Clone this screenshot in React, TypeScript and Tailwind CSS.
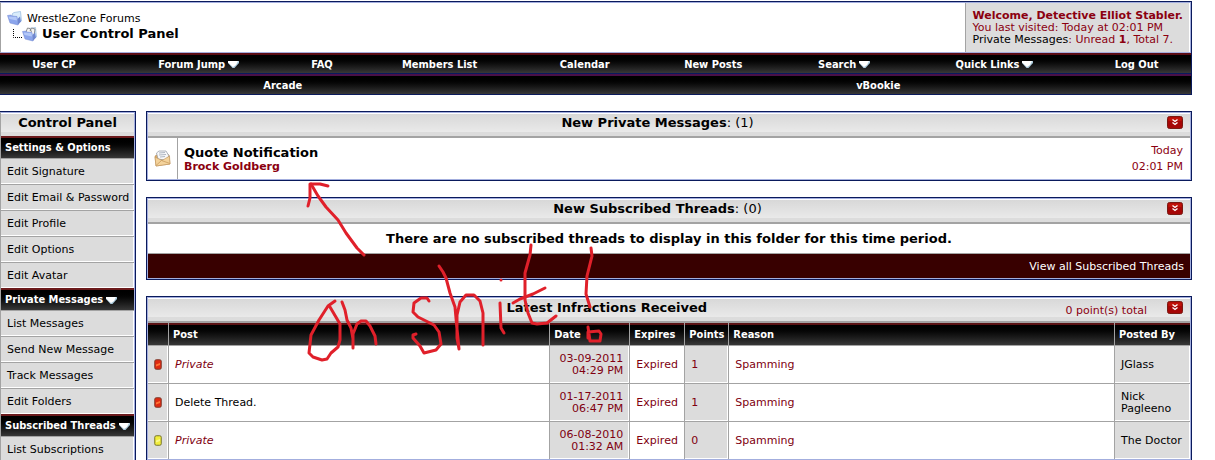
import type { ReactNode } from 'react';

const navLinks = [
  { label: 'User CP' },
  { label: 'Forum Jump', menu: true },
  { label: 'FAQ' },
  { label: 'Members List' },
  { label: 'Calendar' },
  { label: 'New Posts' },
  { label: 'Search', menu: true },
  { label: 'Quick Links', menu: true },
  { label: 'Log Out' },
];

const subLinks = [{ label: 'Arcade' }, { label: 'vBookie' }];

const sections = [
  {
    title: 'Settings & Options',
    menu: false,
    items: ['Edit Signature', 'Edit Email & Password', 'Edit Profile', 'Edit Options', 'Edit Avatar'],
  },
  {
    title: 'Private Messages',
    menu: true,
    items: ['List Messages', 'Send New Message', 'Track Messages', 'Edit Folders'],
  },
  { title: 'Subscribed Threads', menu: true, items: ['List Subscriptions'] },
];

const infractions = [
  { card: 'red', post: 'Private', hidden: true, date: '03-09-2011', time: '04:29 PM', points: 1, by: 'JGlass' },
  { card: 'red', post: 'Delete Thread.', hidden: false, date: '01-17-2011', time: '06:47 PM', points: 1, by: 'Nick Pagleeno' },
  { card: 'yellow', post: 'Private', hidden: true, date: '06-08-2010', time: '01:32 AM', points: 0, by: 'The Doctor' },
];

const condensed = "[font-family:'DejaVu_Sans_Condensed','DejaVu_Sans',sans-serif] [font-stretch:condensed]";
const blackBar = 'bg-linear-to-b from-black to-[#383838] text-white font-bold';
const titleBar = 'border-t border-white bg-linear-to-b from-[#d8d8d8] from-0% via-[#e9e9e9] via-80% to-[#dcdcdc] to-80%';

function MenuArrow() {
  return (
    <svg className="ml-[3px] inline-block" width="11" height="7" viewBox="0 0 11 7" aria-hidden="true">
      <path d="M0 0H11V2L6.500 7H4.500L0 2Z" fill="#a9c9da" />
      <path d="M0 0H10L8 4L5 6L0 1.500Z" fill="#fff" />
    </svg>
  );
}

function FolderIcon({ filled = false }: { filled?: boolean }) {
  return (
    <svg width="15" height="15" viewBox="0 0 15 15" aria-hidden="true">
      <path d="M5 3L7 1.500L13.500 0.500L14.500 10L9 13Z" fill="#d9ecfb" stroke="#94b8de" strokeWidth="0.7" />
      {filled && <path d="M4 5L5.500 1L8 1.500L9.500 5M8 4L9.500 1L13 2L12 9" fill="#f4f4f4" stroke="#777" strokeWidth="0.8" />}
      <path d="M0.500 4.500L4 4L5 5L10 5.500L11 14L3 12Z" fill="#8ba5ec" stroke="#7289d2" strokeWidth="0.5" />
      <path d="M1.500 5.500L9.500 6L10 9.500L2.500 8Z" fill="#b3c8f8" />
      <path d="M11 14L14 10.500L13 5.500L10.500 8Z" fill="#6f87d0" />
    </svg>
  );
}

function MessageIcon() {
  return (
    <svg width="17" height="17" viewBox="0 0 17 17" aria-hidden="true">
      <path d="M1 6L8 2L15 5L16 14L2 16Z" fill="#dcae6c" stroke="#b88a4c" strokeWidth="0.6" />
      <path d="M2.500 3L5 1H12L15 6L11 10L4 9Z" fill="#f7f8fa" stroke="#8d95a2" strokeWidth="0.7" />
      <path d="M5 3L11 2.500M5 5L12 4.500M6 7L11 6.500" stroke="#9da6b4" strokeWidth="0.8" />
      <path d="M1 7L8 10.500L15.500 6L16 14L2 16Z" fill="#f4d39c" stroke="#bd925a" strokeWidth="0.6" />
      <path d="M2 15.500L7.500 10.500L16 13.500" fill="none" stroke="#c99c5d" strokeWidth="0.8" />
    </svg>
  );
}

function Card({ color }: { color: string }) {
  const red = color === 'red';
  return (
    <svg className="mx-auto block" width="8" height="11" viewBox="0 0 8 11" role="img" aria-label={`${color} card`}>
      <rect x="0.75" y="0.75" width="6.5" height="9.5" rx="1.5" fill={red ? '#e02a10' : '#f2ee3c'} stroke={red ? '#7d3a2c' : '#77752c'} />
      <path d="M2 5.500L6 4V6L2 7.500Z" fill={red ? '#ff7434' : '#fbf98c'} />
    </svg>
  );
}

function CollapseButton() {
  return (
    <button type="button" aria-label="Collapse" className="block h-[13px] w-4 shrink-0">
      <svg width="16" height="13" viewBox="0 0 16 13" aria-hidden="true">
        <rect x="0.5" y="0.5" width="15" height="12" rx="2" fill="#a60606" stroke="#7a1a12" />
        <path d="M1.500 1.500H14.500V5H1.500Z" fill="#c01208" />
        <path d="M5.500 3.500L8 5.500L10.500 3.500M5.500 6.500L8 8.500L10.500 6.500" fill="none" stroke="#fff" strokeWidth="1.300" />
      </svg>
    </button>
  );
}

function NavRow({ links, edge }: { links: { label: string; menu?: boolean }[]; edge: string }) {
  return (
    <ul className={`table w-full border-t-2 border-b border-b-[#0a1a5c] ${edge} ${blackBar} ${condensed}`}>
      {links.map((link) => (
        <li key={link.label} className="table-cell h-[18px] px-1.5 text-center align-middle whitespace-nowrap">
          <a href="#">
            {link.label}
            {link.menu && <MenuArrow />}
          </a>
        </li>
      ))}
    </ul>
  );
}

function Panel({ title, count, extra, children }: { title: string; count?: number; extra?: ReactNode; children: ReactNode }) {
  return (
    <section className="border border-[#0a1a5c]">
      <div className="border border-[#a3aede]">
        <header className={`flex h-[25px] items-start border-b-2 border-b-[#a3a3a3] pr-[7px] ${titleBar}`}>
          <h2 className="flex-1 text-center text-[13px] leading-[18px] font-bold">
            {title}
            {count !== undefined && <span className="font-normal">: ({count})</span>}
          </h2>
          {extra}
          <div className="pt-0.5">
            <CollapseButton />
          </div>
        </header>
        {children}
      </div>
    </section>
  );
}

function Sidebar() {
  return (
    <aside className="w-[136px] shrink-0 border border-l-0 border-[#0a1a5c]">
      <div className="border border-[#a3aede] border-l-[#a3a3a3]">
        <h2 className={`h-[23px] text-center text-[13px] leading-[18px] font-bold ${titleBar}`}>Control Panel</h2>
        {sections.map((section) => (
          <div key={section.title}>
            <h3 className={`h-[22px] border-t-2 border-t-[#6b1a1c] pl-1 leading-5 whitespace-nowrap ${blackBar} ${condensed}`}>
              {section.title}
              {section.menu && <MenuArrow />}
            </h3>
            <ul>
              {section.items.map((item) => (
                <li key={item} className="border-t border-[#a3a3a3]">
                  <a href="#" className="block h-[25px] border-r border-b border-white bg-[#dcdcdc] pl-1.5 leading-[26px] whitespace-nowrap">
                    {item}
                  </a>
                </li>
              ))}
            </ul>
          </div>
        ))}
      </div>
    </aside>
  );
}

function InfractionTable() {
  const head = 'border-l border-[#a3a3a3] px-1 text-left first:border-l-0';
  const cell = 'border-l border-[#a3a3a3] px-1.5';
  const shade = 'border-l border-[#a3a3a3] bg-[#dcdcdc] px-1.5 shadow-[inset_-1px_-1px_0_#fff] first:border-l-0';
  return (
    <table className="w-full table-fixed border-separate border-spacing-0 text-[#800010]">
      <colgroup>
        <col className="w-5" />
        <col className="w-[36.6%]" />
        <col className="w-20" />
        <col className="w-[55px]" />
        <col className="w-11" />
        <col />
        <col className="w-[76px]" />
      </colgroup>
      <thead>
        <tr className={`h-[22px] shadow-[inset_0_2px_0_#5a1214] ${blackBar} ${condensed}`}>
          <th className={head} aria-label="Card" />
          {['Post', 'Date', 'Expires', 'Points', 'Reason', 'Posted By'].map((name) => (
            <th key={name} className={head}>{name}</th>
          ))}
        </tr>
      </thead>
      <tbody className="[&_td]:border-t">
        {infractions.map((row) => (
          <tr key={row.date} className="h-[38px] bg-white">
            <td className={`${shade} px-0`}>
              <Card color={row.card} />
            </td>
            <td className={cell}>
              <a href="#" className={row.hidden ? 'italic' : 'text-black'}>{row.post}</a>
            </td>
            <td className={`${shade} text-right leading-3`}>
              {row.date}
              <br />
              {row.time}
            </td>
            <td className={cell}>Expired</td>
            <td className={shade}>{row.points}</td>
            <td className={cell}>Spamming</td>
            <td className={`${shade} leading-3 text-black`}>{row.by}</td>
          </tr>
        ))}
      </tbody>
    </table>
  );
}

// red pen marks drawn over the page
function Scribble() {
  return (
    <svg
      className="pointer-events-none absolute top-0 left-0"
      width="640"
      height="380"
      viewBox="0 0 640 380"
      fill="none"
      stroke="#e0202a"
      strokeWidth="3"
      strokeLinecap="round"
      strokeLinejoin="round"
      aria-hidden="true"
    >
      <path d="M364 255L357 248L346 233L338 220L326 207L318 196L311 184" />
      <path d="M308 206L310 198L310 184L320 184L328 186" />
      <path d="M335 301L328 306L319 320L311 335L309 353L313 357L322 360L327 359L331 353L338 347L340 340L340 324L330 307" />
      <path d="M342 302L345 310L347 320L351 328L353 339L353 348L353 334L357 324L361 321L366 321L370 326L375 336L376 344" />
      <path d="M429 301L427 298L421 298L414 303L413 312L418 317L434 325L439 332L441 344L436 350L424 353L420 346L413 338L413 335L416 334" />
      <path d="M439 266L443 272L446 278L450 293L455 307L457 329L459 349L457 338L457 315L460 302L466 295L474 295L480 301L483 313L483 345" />
      <path d="M501 280V280.100M500 303L501 328L504 333" />
      <path d="M531 245L530 255L525 273L525 300L528 313L532 323L537 324L547 323L556 316" />
      <path d="M513 303L520 299L533 294L545 288" />
      <path d="M591 248L592 256L587 276L586 294L590 307" />
      <path d="M588 327L590 341L600 341L601 334L599 331L588 332L588 338" />
    </svg>
  );
}

export default function App() {
  return (
    <div className="relative pt-px pr-[23px] text-[11px] leading-[13px] text-black [font-family:'DejaVu_Sans',sans-serif]">
      <header className="border border-b-0 border-l-0 border-[#0a1a5c]">
        <div className="flex h-[51px] border border-[#a3aede] border-l-[#a3a3a3]">
          <div className="flex-1 pt-2 pl-1.5">
            <div className="flex items-center gap-[5px]">
              <FolderIcon />
              <a href="#">WrestleZone Forums</a>
            </div>
            <div className="flex items-center pl-1.5">
              <svg width="9" height="11" viewBox="0 0 9 11" aria-hidden="true">
                <path d="M0.500 0V8.500H9" fill="none" stroke="#000" strokeDasharray="1 1" />
              </svg>
              <FolderIcon filled />
              <h1 className="pl-[5px] text-[13px] leading-4 font-bold">User Control Panel</h1>
            </div>
          </div>
          <div className="border-r border-l border-r-white border-l-[#a3a3a3] bg-[#dcdcdc] px-1.5 pt-[7px] leading-3 whitespace-nowrap text-[#8b0010]">
            <strong>Welcome, Detective Elliot Stabler.</strong>
            <p>You last visited: Today at 02:01 PM</p>
            <p>
              <a href="#" className="text-black">Private Messages</a>: Unread <b>1</b>, Total 7.
            </p>
          </div>
        </div>
        <nav>
          <NavRow links={navLinks} edge="border-t-[#5a0c14]" />
          <NavRow links={subLinks} edge="border-t-[#4a1048]" />
        </nav>
      </header>

      <div className="mt-4 flex items-start gap-2.5">
        <Sidebar />
        <main className="flex min-w-0 flex-1 flex-col gap-4">
          <Panel title="New Private Messages" count={1}>
            <div className="flex h-[41px] bg-white">
              <div className="flex w-[30px] items-center justify-center border-r border-[#a3a3a3]">
                <MessageIcon />
              </div>
              <div className="flex-1 pt-[7px] pl-1.5">
                <a href="#" className="block text-[13px] leading-4 font-bold">Quote Notification</a>
                <a href="#" className="block leading-3 font-bold text-[#8b0010]">Brock Goldberg</a>
              </div>
              <div className="pt-[5px] pr-[7px] text-right leading-4 text-[#8b0010]">
                Today
                <br />
                02:01 PM
              </div>
            </div>
          </Panel>

          <Panel title="New Subscribed Threads" count={0}>
            <p className="h-[29px] text-center text-[13px] leading-[30px] font-bold">
              There are no subscribed threads to display in this folder for this time period.
            </p>
            <div className="h-[25px] border-t border-[#a3a3a3] bg-[#380000] pr-1.5 text-right leading-[26px] text-white">
              <a href="#">View all Subscribed Threads</a>
            </div>
          </Panel>

          <Panel
            title="Latest Infractions Received"
            extra={<span className="pt-[5px] pr-5 text-[#8b0010]">0 point(s) total</span>}
          >
            <InfractionTable />
          </Panel>
        </main>
      </div>
      <Scribble />
    </div>
  );
}
